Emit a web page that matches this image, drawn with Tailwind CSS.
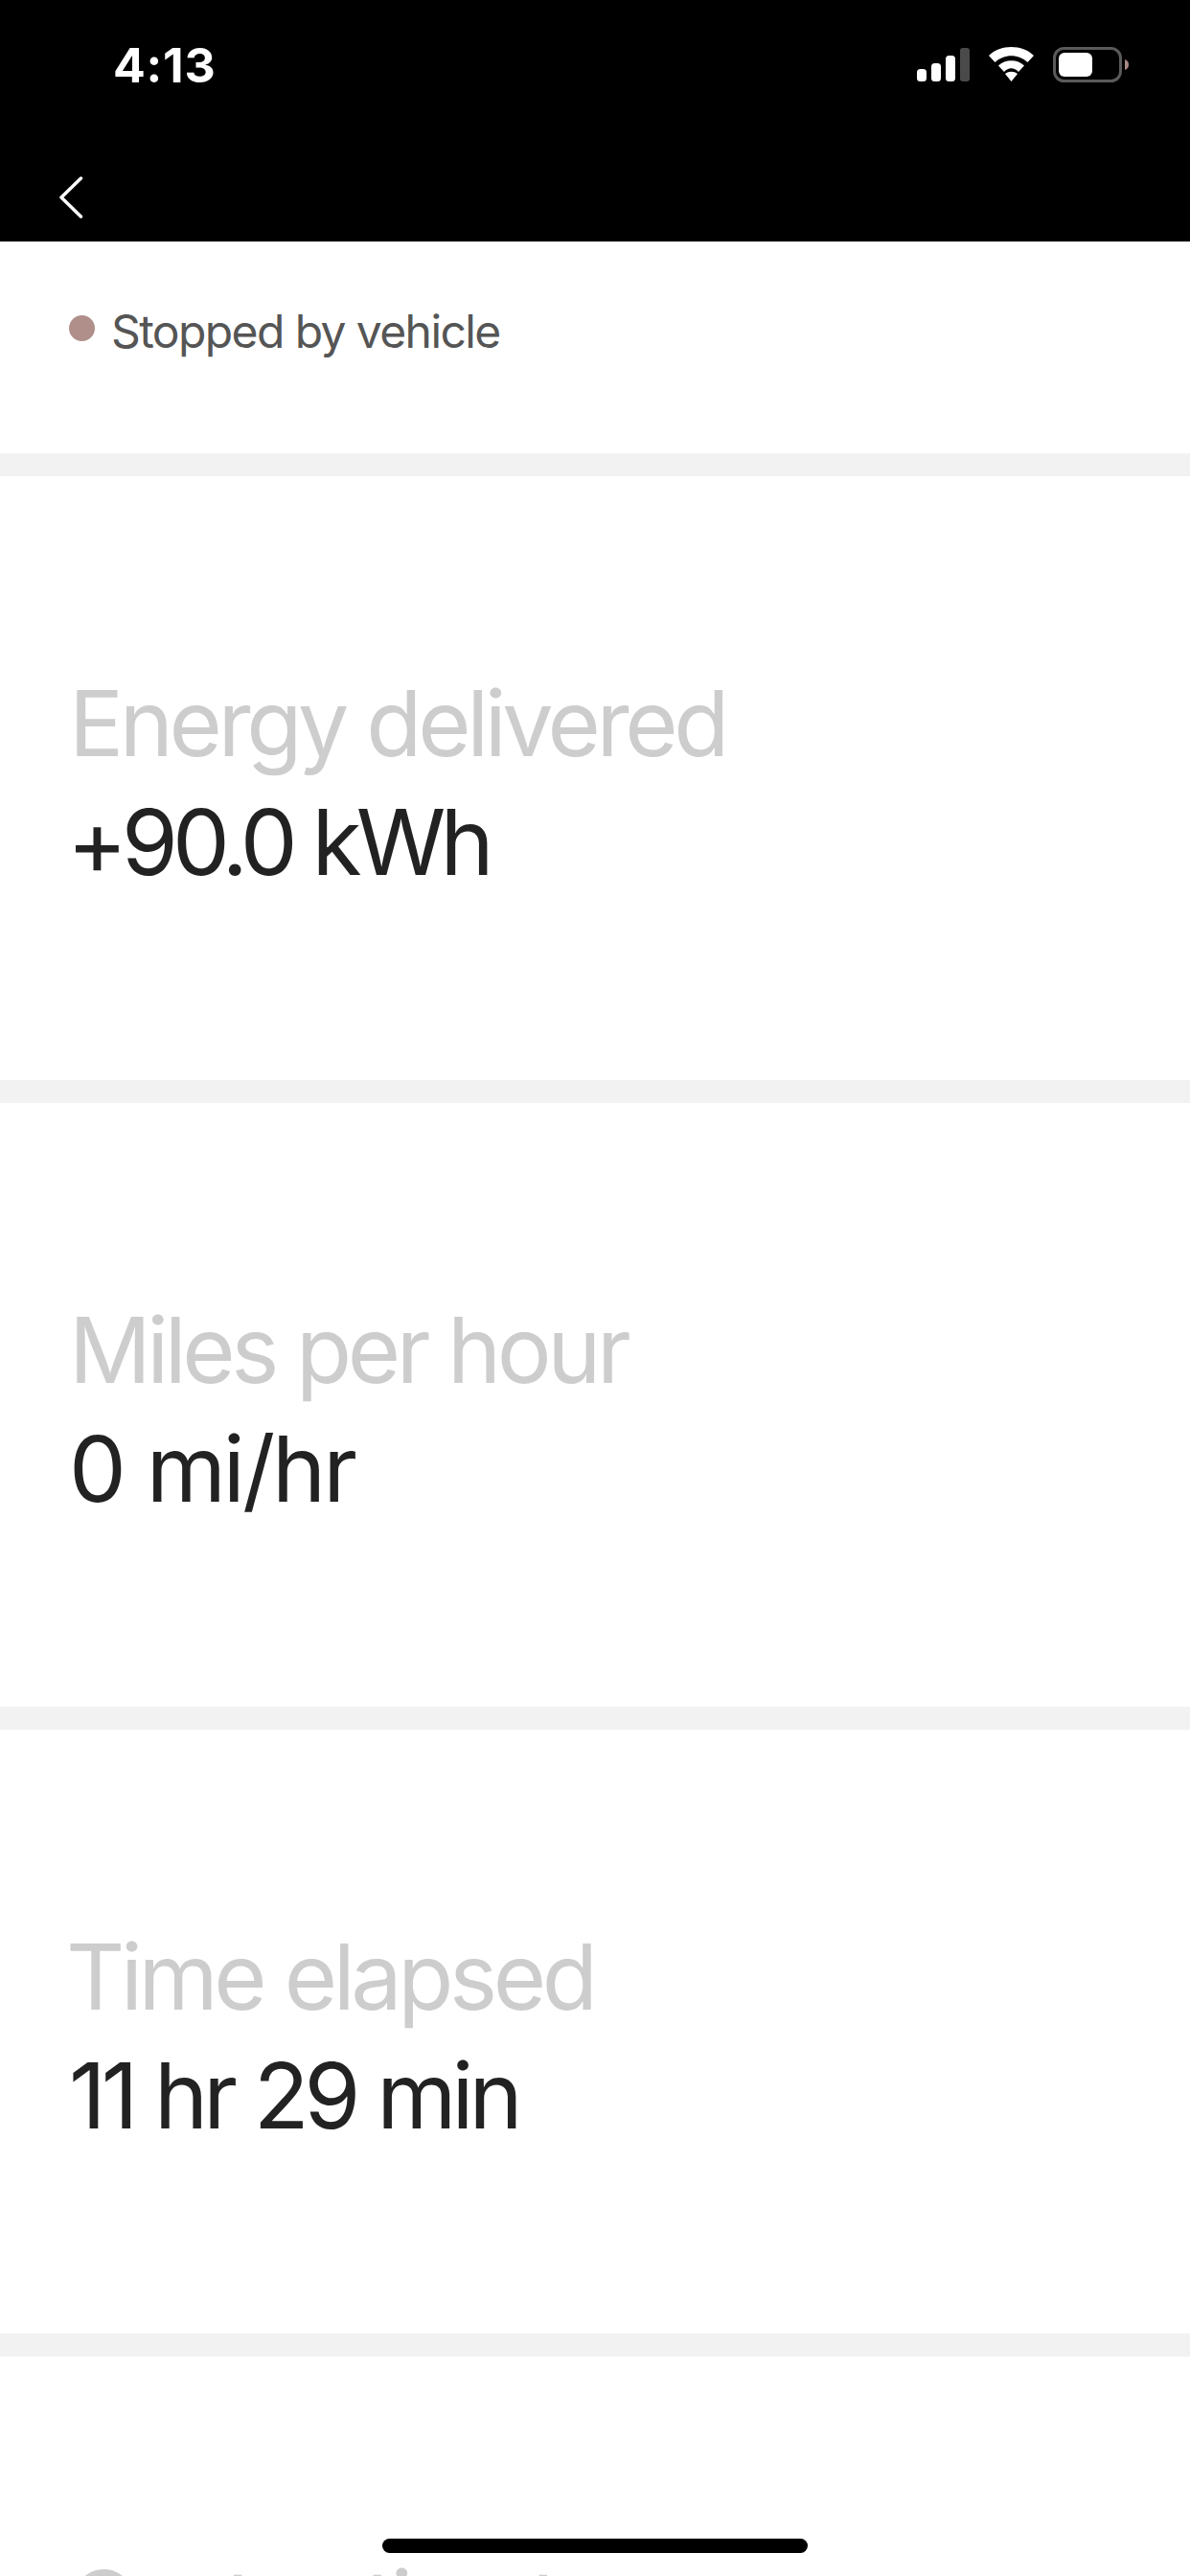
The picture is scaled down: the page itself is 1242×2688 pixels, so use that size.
<!DOCTYPE html>
<html><head><script src="https://cdn.jsdelivr.net/npm/@tailwindcss/browser@4"></script></head>
<body class="bg-white">
<div class="relative w-[1242px] h-[2688px] overflow-hidden bg-[#f2f2f2] font-['Inter',sans-serif]">
  <header class="h-[252px] bg-black text-white flex flex-col">
    <div class="h-[134px] flex items-start justify-between pl-[118px] pr-[63px] pt-[38px]">
      <span class="font-bold text-[50px] leading-[60px] tracking-[0.8px]">4:13</span>
      <svg class="mt-[11px]" width="222" height="38" viewBox="0 0 222 38">
        <rect x="0" y="23" width="10" height="13" rx="3.5" fill="#fff"/>
        <rect x="15" y="17" width="10" height="19" rx="3.5" fill="#fff"/>
        <rect x="30" y="9" width="10" height="27" rx="3.5" fill="#fff"/>
        <rect x="45" y="1" width="10" height="35" rx="3" fill="#4a4a4a"/>
        <path d="M75 9C87 -3 110 -3 122 9L115.500 16C106 7 91 7 81.500 16Z" fill="#fff"/>
        <path d="M85 19.500C92 12.500 105 12.500 112 19.500L106 26C101.500 21 95.500 21 91 26Z" fill="#fff"/>
        <path d="M92 28C96 25 101 25 105 28L98.500 36Z" fill="#fff"/>
        <rect x="143.500" y="1.500" width="69" height="34" rx="10" fill="none" stroke="#5a5a5a" stroke-width="3"/>
        <rect x="148" y="6" width="35" height="25" rx="6" fill="#fff"/>
        <path d="M217 13C220 14 221 16 221 18.500C221 21 220 23 217 24Z" fill="#a88a84"/>
      </svg>
    </div>
    <div class="h-[118px] pl-[61px] pt-[50px]">
      <svg width="26" height="44" viewBox="0 0 26 44" class="block"><path d="M23.500 2L3 22L23.500 42" fill="none" stroke="#fff" stroke-width="3.500" stroke-linecap="round" stroke-linejoin="round"/></svg>
    </div>
  </header>
  <section class="h-[221px] bg-white flex items-start pl-[72px] pt-[65px] gap-[17px]">
    <span class="w-[27px] h-[27px] mt-[12px] rounded-full bg-[#b08f8a]"></span>
    <span class="text-[48px] leading-[58px] tracking-[-1.600px] text-[#555]">Stopped by vehicle</span>
  </section>
  <section class="mt-[24px] h-[630px] bg-white pl-[72px] pt-[196px]">
    <p class="text-[95px] leading-[124px] tracking-[-4.400px] text-[#cdcdcd]">Energy delivered</p>
    <p class="-ml-[2px] text-[95px] leading-[124px] tracking-[-5.900px] text-[#222]">+90.0 kWh</p>
  </section>
  <section class="mt-[24px] h-[630px] bg-white pl-[72px] pt-[196px]">
    <p class="text-[95px] leading-[124px] tracking-[-4.500px] text-[#cdcdcd]">Miles per hour</p>
    <p class="text-[95px] leading-[124px] tracking-[-3px] text-[#222]">0 mi/hr</p>
  </section>
  <section class="mt-[24px] h-[630px] bg-white pl-[72px] pt-[196px]">
    <p class="-ml-[3px] text-[95px] leading-[124px] tracking-[-4.400px] text-[#cdcdcd]">Time elapsed</p>
    <p class="text-[95px] leading-[124px] tracking-[-5px] text-[#222]">11 hr 29 min</p>
  </section>
  <section class="mt-[24px] h-[229px] bg-white pl-[72px] pt-[196px]">
    <p class="text-[95px] leading-[124px] tracking-[-4.400px] text-[#cdcdcd]">Cost estimate</p>
  </section>
  <div class="absolute left-[399px] top-[2649px] w-[444px] h-[15px] rounded-full bg-black"></div>
</div>
</body></html>
